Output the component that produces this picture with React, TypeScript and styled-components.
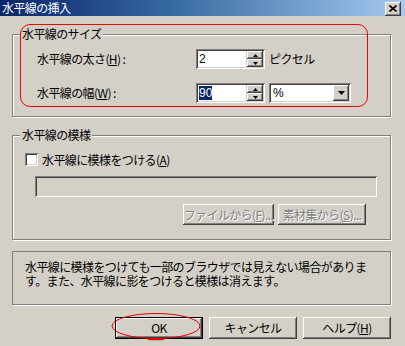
import React from "react";
import styled, { createGlobalStyle, css } from "styled-components";

const GlobalStyle = createGlobalStyle`
  html, body { margin: 0; padding: 0; background: #d4d0c8; }
  body { font-family: "Noto Sans CJK JP", "Noto Sans", sans-serif; font-size: 12px; color: #000; }
  * { box-sizing: border-box; }
`;

const raised = css`
  background: #d4d0c8;
  box-shadow: inset -1px -1px 0 #404040, inset 1px 1px 0 #ffffff,
    inset -2px -2px 0 #808080, inset 2px 2px 0 #d4d0c8;
`;

const sunken = css`
  box-shadow: inset 1px 1px 0 #808080, inset -1px -1px 0 #ffffff,
    inset 2px 2px 0 #404040, inset -2px -2px 0 #d4d0c8;
`;

const Window = styled.div`
  position: relative;
  width: 405px;
  height: 346px;
  background: #d4d0c8;
  overflow: hidden;
  display: flex;
  flex-direction: column;
  letter-spacing: -0.6px;
`;

const TitleBar = styled.div`
  height: 16px;
  display: flex;
  align-items: center;
  justify-content: space-between;
  padding: 0 4px 0 2px;
  background: linear-gradient(to right, #0a246a 0%, #3a6ea5 45%, #a6caf0 100%);
`;

const TitleText = styled.span`
  color: #fff;
  font-size: 12px;
  line-height: 16px;
`;

const CloseBtn = styled.div`
  ${raised};
  width: 16px;
  height: 14px;
  display: flex;
  align-items: center;
  justify-content: center;
  margin-top: 1px;
`;

const Body = styled.div`
  display: flex;
  flex-direction: column;
  padding: 0 14px 0 12px;
`;

const Group = styled.div<{ $mt: number; $h: number }>`
  position: relative;
  margin-top: ${(p) => p.$mt}px;
  height: ${(p) => p.$h}px;
  border: 1px solid #808080;
  box-shadow: inset 1px 1px 0 #ffffff, 1px 1px 0 #ffffff;
`;

const GroupTitle = styled.span`
  position: absolute;
  top: -9px;
  left: 7px;
  padding: 0 2px;
  background: #d4d0c8;
  line-height: 16px;
`;

const SizeRows = styled.div`
  display: flex;
  flex-direction: column;
  gap: 14px;
  padding: 14px 0 0 24px;
`;

const FieldRow = styled.div`
  display: grid;
  grid-template-columns: 155px 69px auto;
  column-gap: 4px;
  align-items: center;
  height: 20px;
`;

const Label = styled.span`
  line-height: 16px;
`;

const SpinBox = styled.div`
  ${sunken};
  background: #d4d0c8;
  width: 69px;
  height: 20px;
  padding: 2px;
  display: flex;
`;

const SpinText = styled.div`
  flex: 1;
  background: #fff;
  padding-left: 1px;
  line-height: 16px;
  font-family: "Liberation Sans", Arial, sans-serif;
  letter-spacing: 0;
`;

const Selected = styled.span`
  background: #0a246a;
  color: #fff;
`;

const SpinButtons = styled.div`
  width: 16px;
  display: flex;
  flex-direction: column;
  margin-left: 1px;
`;

const SpinButton = styled.div`
  ${raised};
  height: 8px;
  display: flex;
  align-items: center;
  justify-content: center;
`;

const Combo = styled.div`
  ${sunken};
  width: 82px;
  height: 20px;
  padding: 2px;
  background: #fff;
  display: flex;
`;

const ComboText = styled.div`
  flex: 1;
  line-height: 16px;
  padding-left: 2px;
  font-family: "Liberation Sans", Arial, sans-serif;
  letter-spacing: 0;
`;

const ComboButton = styled.div`
  ${raised};
  width: 16px;
  height: 16px;
  display: flex;
  align-items: center;
  justify-content: center;
`;

const PatternBody = styled.div`
  display: flex;
  flex-direction: column;
  padding: 17px 13px 0 12px;
`;

const CheckRow = styled.div`
  display: flex;
  align-items: center;
  gap: 4px;
  height: 13px;
`;

const CheckBox = styled.div`
  ${sunken};
  width: 13px;
  height: 13px;
  background: #fff;
`;

const FileField = styled.div`
  ${sunken};
  margin: 10px 0 0 10px;
  height: 21px;
  background: #d4d0c8;
`;

const ButtonRow = styled.div<{ $mt: number; $pr: number; $gap: number }>`
  display: flex;
  justify-content: flex-end;
  gap: ${(p) => p.$gap}px;
  margin-top: ${(p) => p.$mt}px;
  padding-right: ${(p) => p.$pr}px;
`;

const Button = styled.div<{ $w: number; $h: number; $disabled?: boolean; $default?: boolean }>`
  ${raised};
  width: ${(p) => p.$w}px;
  height: ${(p) => p.$h}px;
  display: flex;
  align-items: center;
  justify-content: center;
  line-height: 16px;
  white-space: nowrap;
  ${(p) =>
    p.$disabled &&
    css`
      color: #808080;
      text-shadow: 1px 1px 0 #ffffff;
    `}
  ${(p) =>
    p.$default &&
    css`
      border: 1px solid #000;
    `}
`;

const InfoBox = styled.div`
  margin-top: 11px;
  height: 54px;
  border: 1px solid #808080;
  box-shadow: 1px 1px 0 #ffffff;
  padding: 8px 0 0 12px;
  display: flex;
  flex-direction: column;
`;

const InfoLine = styled.div`
  height: 14px;
  line-height: 14px;
  white-space: nowrap;
`;

const Annotation = styled.div`
  position: absolute;
  left: 20px;
  top: 24px;
  width: 348px;
  height: 83px;
  border: 1px solid #f00000;
  border-radius: 10px;
  pointer-events: none;
`;

const Ellipse = styled.svg`
  position: absolute;
  left: 111px;
  top: 312px;
  pointer-events: none;
`;

const UpArrow = () => (
  <svg width="5" height="3" viewBox="0 0 5 3">
    <path d="M2.5 0 L5 3 L0 3 Z" fill="#000" />
  </svg>
);
const DownArrow = ({ w = 5, h = 3 }: { w?: number; h?: number }) => (
  <svg width={w} height={h} viewBox={`0 0 ${w} ${h}`}>
    <path d={`M0 0 L${w} 0 L${w / 2} ${h} Z`} fill="#000" />
  </svg>
);

const Spin = ({ children }: { children: React.ReactNode }) => (
  <SpinBox>
    <SpinText>{children}</SpinText>
    <SpinButtons>
      <SpinButton>
        <UpArrow />
      </SpinButton>
      <SpinButton>
        <DownArrow />
      </SpinButton>
    </SpinButtons>
  </SpinBox>
);

export default function App() {
  return (
    <>
      <GlobalStyle />
      <Window>
        <TitleBar>
          <TitleText>水平線の挿入</TitleText>
          <CloseBtn>
            <svg width="8" height="7" viewBox="0 0 8 7">
              <path d="M0.5 0.5 L7.5 6.5 M7.5 0.5 L0.5 6.5" stroke="#000" strokeWidth="1.6" />
            </svg>
          </CloseBtn>
        </TitleBar>
        <Body>
          <Group $mt={18} $h={83}>
            <GroupTitle>水平線のサイズ</GroupTitle>
            <SizeRows>
              <FieldRow>
                <Label>
                  水平線の太さ(<u>H</u>) :
                </Label>
                <Spin>2</Spin>
                <Label>ピクセル</Label>
              </FieldRow>
              <FieldRow>
                <Label>
                  水平線の幅(<u>W</u>) :
                </Label>
                <Spin>
                  <Selected>90</Selected>
                </Spin>
                <Combo>
                  <ComboText>%</ComboText>
                  <ComboButton>
                    <DownArrow w={7} h={4} />
                  </ComboButton>
                </Combo>
              </FieldRow>
            </SizeRows>
          </Group>
          <Group $mt={18} $h={105}>
            <GroupTitle>水平線の模様</GroupTitle>
            <PatternBody>
              <CheckRow>
                <CheckBox />
                <Label>
                  水平線に模様をつける(<u>A</u>)
                </Label>
              </CheckRow>
              <FileField />
              <ButtonRow $mt={7} $pr={11} $gap={4}>
                <Button $w={91} $h={21} $disabled>
                  ファイルから(<u>F</u>)...
                </Button>
                <Button $w={88} $h={21} $disabled>
                  素材集から(<u>S</u>)...
                </Button>
              </ButtonRow>
            </PatternBody>
          </Group>
          <InfoBox>
            <InfoLine>水平線に模様をつけても一部のブラウザでは見えない場合がありま</InfoLine>
            <InfoLine>す。また、水平線に影をつけると模様は消えます。</InfoLine>
          </InfoBox>
          <ButtonRow $mt={12} $pr={0} $gap={6}>
            <Button $w={88} $h={22} $default>
              OK
            </Button>
            <Button $w={88} $h={22}>
              キャンセル
            </Button>
            <Button $w={88} $h={22}>
              ヘルプ(<u>H</u>)
            </Button>
          </ButtonRow>
        </Body>
        <Annotation />
        <Ellipse width="92" height="30" viewBox="0 0 92 30">
          <ellipse cx="45" cy="14" rx="44" ry="12.5" fill="none" stroke="#e00000" strokeWidth="1" />
          <path d="M37 27 Q45 27.5 53 27" stroke="#e00000" strokeWidth="2" fill="none" />
        </Ellipse>
      </Window>
    </>
  );
}
